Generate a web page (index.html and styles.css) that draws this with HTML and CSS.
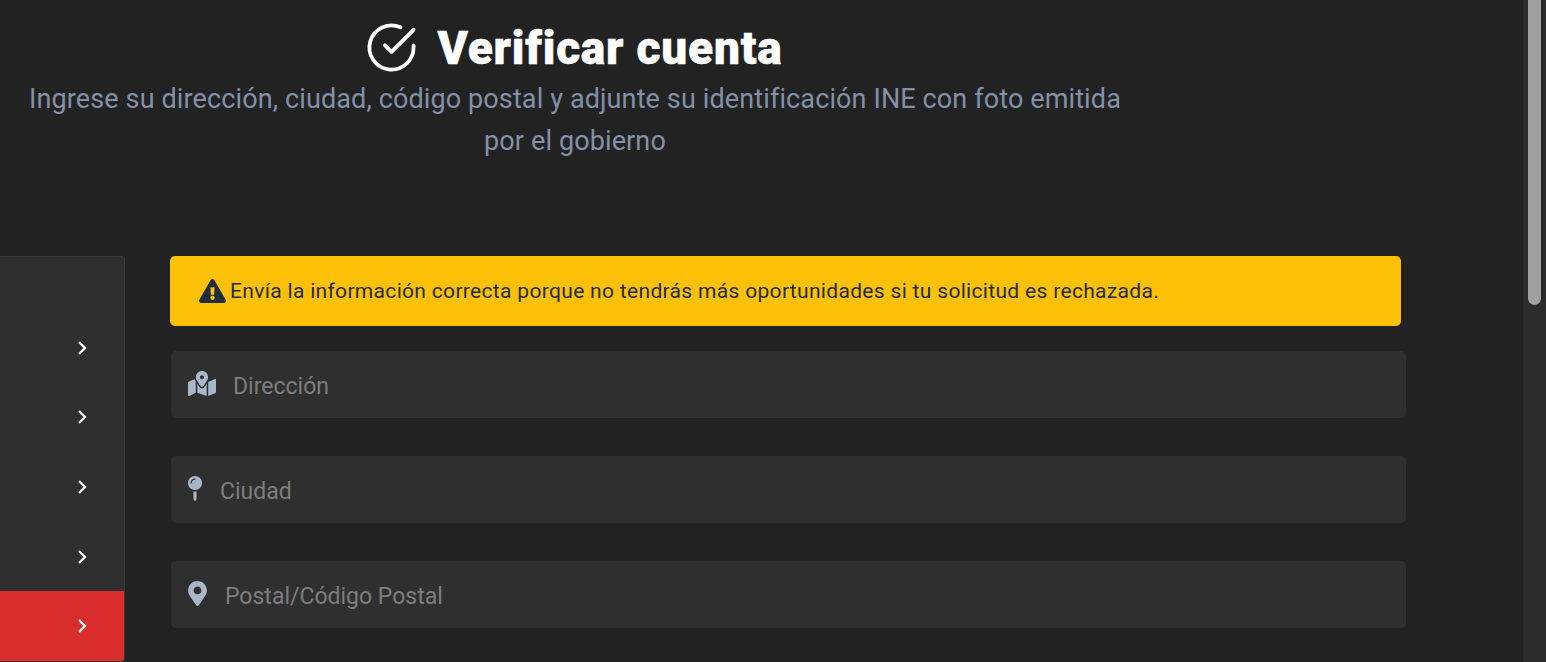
FILE: index.html
```html
<!DOCTYPE html>
<html lang="es">
    <head>
        <meta charset="utf-8">
        <title>Verificar cuenta</title>
        <link rel="stylesheet" href="styles.css">
    </head>
    <body>
        <main class="page">
            <header class="page-header">
                <h1 class="page-title">
                    <svg class="title-icon" viewBox="0 0 24 24" fill="none" stroke="currentColor" stroke-width="1.7" stroke-linecap="round" stroke-linejoin="round">
                        <path d="M22 11.08V12a10 10 0 1 1-5.93-9.14"></path>
                        <polyline points="22 4 12 14.01 9 11.01"></polyline>
                    </svg>
                    Verificar cuenta
                </h1>
                <p class="page-subtitle">Ingrese su dirección, ciudad, código postal y adjunte su identificación INE con foto emitida por el gobierno</p>
            </header>

            <div class="content">
                <nav class="steps">
                    <div class="steps-top"></div>
                    <a class="step" href="#"><svg class="chevron" viewBox="0 0 10 16"><polyline points="2 2 8 8 2 14"></polyline></svg></a>
                    <a class="step" href="#"><svg class="chevron" viewBox="0 0 10 16"><polyline points="2 2 8 8 2 14"></polyline></svg></a>
                    <a class="step" href="#"><svg class="chevron" viewBox="0 0 10 16"><polyline points="2 2 8 8 2 14"></polyline></svg></a>
                    <a class="step" href="#"><svg class="chevron" viewBox="0 0 10 16"><polyline points="2 2 8 8 2 14"></polyline></svg></a>
                    <a class="step active" href="#"><svg class="chevron" viewBox="0 0 10 16"><polyline points="2 2 8 8 2 14"></polyline></svg></a>
                </nav>

                <form class="verify-form">
                    <div class="alert">
                        <svg class="alert-icon" viewBox="0 0 576 512"><path d="M569.517 440.013C587.975 472.007 564.806 512 527.94 512H48.054c-36.937 0-59.999-40.055-41.577-71.987L246.423 24.035c18.467-32.009 64.72-31.951 83.154 0l239.94 416.028zM288 354c-25.405 0-46 20.595-46 46s20.595 46 46 46 46-20.595 46-46-20.595-46-46-46zm-43.673-165.346l7.418 136c.347 6.364 5.609 11.346 11.982 11.346h48.546c6.373 0 11.635-4.982 11.982-11.346l7.418-136c.375-6.874-5.098-12.654-11.982-12.654h-63.383c-6.884 0-12.356 5.78-11.981 12.654z"></path></svg>
                        <span>Envía la información correcta porque no tendrás más oportunidades si tu solicitud es rechazada.</span>
                    </div>

                    <label class="field">
                        <svg class="field-icon icon-map" viewBox="0 0 576 512"><path d="M288 0c-69.59 0-126 56.41-126 126 0 56.26 82.35 158.8 113.9 196.02 6.39 7.54 17.82 7.54 24.2 0C331.65 284.8 414 182.26 414 126 414 56.41 357.59 0 288 0zm0 168c-23.2 0-42-18.8-42-42s18.8-42 42-42 42 18.8 42 42-18.8 42-42 42zM20.12 215.95A32.006 32.006 0 0 0 0 245.66v250.32c0 11.32 11.43 19.06 21.94 14.86L160 448V214.92c-8.84-15.98-16.07-31.54-21.25-46.42L20.12 215.95zM288 359.67c-14.07 0-27.38-6.18-36.51-16.96-19.66-23.2-40.57-49.62-59.49-76.72V448l192 64V265.99c-18.92 27.09-39.82 53.52-59.49 76.72-9.13 10.77-22.44 16.96-36.51 16.96zm266.06-198.51L416 224v288l139.88-55.95A31.996 31.996 0 0 0 576 426.34V176.02c0-11.32-11.43-19.06-21.94-14.86z"></path></svg>
                        <input type="text" placeholder="Dirección">
                    </label>

                    <label class="field">
                        <svg class="field-icon icon-pin" viewBox="0 0 288 512"><path d="M112 316.94v156.69l22.02 33.02c4.75 7.12 15.22 7.12 19.97 0L176 473.63V316.94c-10.39 1.92-21.06 3.06-32 3.06s-21.61-1.14-32-3.06zM144 0C64.47 0 0 64.47 0 144s64.47 144 144 144 144-64.47 144-144S223.53 0 144 0zm0 76c-37.5 0-68 30.5-68 68 0 6.62-5.38 12-12 12s-12-5.38-12-12c0-50.73 41.28-92 92-92 6.62 0 12 5.38 12 12s-5.38 12-12 12z"></path></svg>
                        <input type="text" placeholder="Ciudad">
                    </label>

                    <label class="field">
                        <svg class="field-icon icon-marker" viewBox="0 0 384 512"><path d="M172.268 501.67C26.97 291.031 0 269.413 0 192 0 85.961 85.961 0 192 0s192 85.961 192 192c0 77.413-26.97 99.031-172.268 309.67-9.535 13.774-29.93 13.773-39.464 0zM192 272c44.183 0 80-35.817 80-80s-35.817-80-80-80-80 35.817-80 80 35.817 80 80 80z"></path></svg>
                        <input type="text" placeholder="Postal/Código Postal">
                    </label>
                </form>
            </div>
        </main>

        <div class="scrollbar"><div class="scrollbar-thumb"></div></div>
    </body>
</html>
```

FILE: styles.css
```css
html, body {
    height: 100%;
}

body {
    display: flex;
    margin: 0;
    overflow: hidden;
    background-color: #222222;
    font-family: Roboto, 'Liberation Sans', sans-serif;
    color: #fff;
}

.page {
    flex: 1;
    min-width: 0;
}

.page-header {
    box-sizing: border-box;
    width: 1150px;
    height: 256px;
    padding: 21px 28px 0;
    text-align: center;
}

.page-title {
    display: flex;
    justify-content: center;
    align-items: center;
    gap: 19px;
    height: 53px;
    margin: 0;
    font-size: 46px;
    font-weight: 900;
    letter-spacing: 0.8px;
    -webkit-text-stroke: 0.5px #fff;
}

.title-icon {
    width: 53px;
    height: 53px;
    margin-left: -2px;
}

.page-subtitle {
    margin: 4px 0 0;
    font-size: 27px;
    line-height: 42px;
    letter-spacing: 0.12px;
    color: #8291a8;
}

.content {
    display: flex;
    align-items: flex-start;
    gap: 45px;
}

/* Step list on the left */
.steps {
    box-sizing: border-box;
    flex: 0 0 125px;
    height: 406px;
    background-color: #2f2f2f;
    border: 1px solid #3a3a3a;
    border-left: none;
    border-radius: 0 4px 4px 0;
    overflow: hidden;
}

.steps-top {
    height: 56px;
}

.step {
    display: flex;
    justify-content: flex-end;
    align-items: center;
    height: 69.6px;
    padding-right: 37px;
}

.step.active {
    background-color: #da2e2e;
}

.chevron {
    width: 10px;
    height: 16px;
    fill: none;
    stroke: #fff;
    stroke-width: 2.2;
}

/* Form */
.verify-form {
    display: flex;
    flex-direction: column;
    width: 1236px;
}

.alert {
    display: flex;
    align-items: center;
    gap: 4px;
    box-sizing: border-box;
    width: 1231px;
    height: 70px;
    margin-bottom: 25px;
    padding-left: 29px;
    background-color: #ffc107;
    border-radius: 5px;
    font-size: 21px;
    letter-spacing: 0.32px;
    color: #1f2d3d;
}

.alert-icon {
    width: 27px;
    height: 24px;
    fill: #1f2d3d;
}

.field {
    display: flex;
    align-items: center;
    box-sizing: border-box;
    height: 67px;
    margin-bottom: 38px;
    margin-left: 1px;
    padding-left: 17px;
    background-color: #2f2f2f;
    border-radius: 5px;
}

.field-icon {
    fill: #a9b8c8;
    margin-top: -2px;
}

.icon-map {
    width: 28px;
    height: 25px;
    margin-right: 17px;
}

.icon-pin {
    width: 14px;
    height: 25px;
    margin-right: 18px;
}

.icon-marker {
    width: 19px;
    height: 25px;
    margin-right: 18px;
}

.field input {
    flex: 1;
    min-width: 0;
    padding: 3px 0 0;
    border: none;
    outline: none;
    background: none;
    font-family: inherit;
    font-size: 23px;
    color: #fff;
}

.field input::placeholder {
    color: #7d7d7d;
    opacity: 1;
}

/* Page scrollbar */
.scrollbar {
    flex: 0 0 23px;
    box-sizing: border-box;
    padding: 0 5px;
    background-color: #2b2b2b;
}

.scrollbar-thumb {
    height: 305px;
    background-color: #a0a0a0;
    border-radius: 0 0 7px 7px;
}
```
